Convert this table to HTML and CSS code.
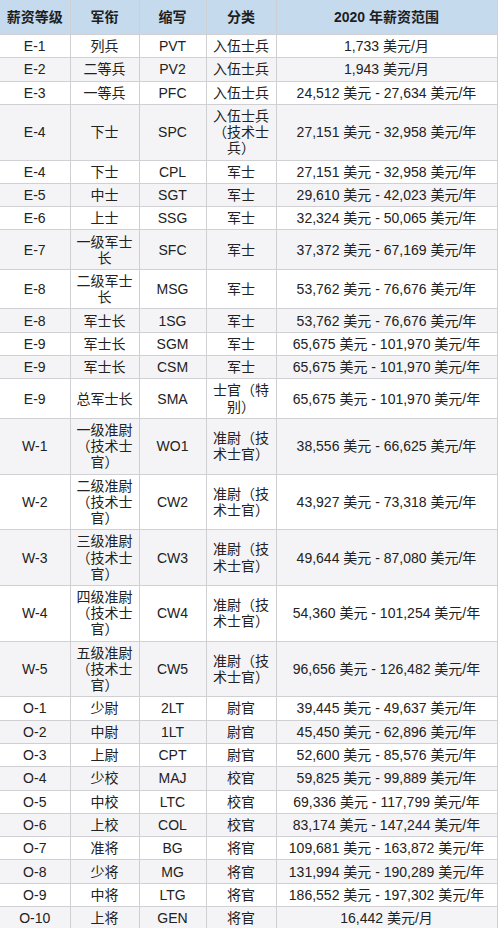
FILE: index.html
```html
<!DOCTYPE html>
<html lang="zh-CN">
<head>
<meta charset="utf-8">
<title>2020 年薪资范围</title>
<link rel="stylesheet" href="styles.css">
</head>
<body>
<table class="pay">
<colgroup>
<col class="c1"><col class="c2"><col class="c3"><col class="c4"><col class="c5">
</colgroup>
<thead>
<tr><th>薪资等级</th><th>军衔</th><th>缩写</th><th>分类</th><th>2020 年薪资范围</th></tr>
</thead>
<tbody>
<tr><td>E-1</td><td>列兵</td><td>PVT</td><td>入伍士兵</td><td>1,733 美元/月</td></tr>
<tr><td>E-2</td><td>二等兵</td><td>PV2</td><td>入伍士兵</td><td>1,943 美元/月</td></tr>
<tr><td>E-3</td><td>一等兵</td><td>PFC</td><td>入伍士兵</td><td>24,512 美元 - 27,634 美元/年</td></tr>
<tr><td>E-4</td><td>下士</td><td>SPC</td><td>入伍士兵（技术士兵）</td><td>27,151 美元 - 32,958 美元/年</td></tr>
<tr><td>E-4</td><td>下士</td><td>CPL</td><td>军士</td><td>27,151 美元 - 32,958 美元/年</td></tr>
<tr><td>E-5</td><td>中士</td><td>SGT</td><td>军士</td><td>29,610 美元 - 42,023 美元/年</td></tr>
<tr><td>E-6</td><td>上士</td><td>SSG</td><td>军士</td><td>32,324 美元 - 50,065 美元/年</td></tr>
<tr><td>E-7</td><td>一级军士长</td><td>SFC</td><td>军士</td><td>37,372 美元 - 67,169 美元/年</td></tr>
<tr><td>E-8</td><td>二级军士长</td><td>MSG</td><td>军士</td><td>53,762 美元 - 76,676 美元/年</td></tr>
<tr><td>E-8</td><td>军士长</td><td>1SG</td><td>军士</td><td>53,762 美元 - 76,676 美元/年</td></tr>
<tr><td>E-9</td><td>军士长</td><td>SGM</td><td>军士</td><td>65,675 美元 - 101,970 美元/年</td></tr>
<tr><td>E-9</td><td>军士长</td><td>CSM</td><td>军士</td><td>65,675 美元 - 101,970 美元/年</td></tr>
<tr><td>E-9</td><td>总军士长</td><td>SMA</td><td>士官（特别）</td><td>65,675 美元 - 101,970 美元/年</td></tr>
<tr><td>W-1</td><td>一级准尉（技术士官）</td><td>WO1</td><td>准尉（技术士官）</td><td>38,556 美元 - 66,625 美元/年</td></tr>
<tr><td>W-2</td><td>二级准尉（技术士官）</td><td>CW2</td><td>准尉（技术士官）</td><td>43,927 美元 - 73,318 美元/年</td></tr>
<tr><td>W-3</td><td>三级准尉（技术士官）</td><td>CW3</td><td>准尉（技术士官）</td><td>49,644 美元 - 87,080 美元/年</td></tr>
<tr><td>W-4</td><td>四级准尉（技术士官）</td><td>CW4</td><td>准尉（技术士官）</td><td>54,360 美元 - 101,254 美元/年</td></tr>
<tr><td>W-5</td><td>五级准尉（技术士官）</td><td>CW5</td><td>准尉（技术士官）</td><td>96,656 美元 - 126,482 美元/年</td></tr>
<tr><td>O-1</td><td>少尉</td><td>2LT</td><td>尉官</td><td>39,445 美元 - 49,637 美元/年</td></tr>
<tr><td>O-2</td><td>中尉</td><td>1LT</td><td>尉官</td><td>45,450 美元 - 62,896 美元/年</td></tr>
<tr><td>O-3</td><td>上尉</td><td>CPT</td><td>尉官</td><td>52,600 美元 - 85,576 美元/年</td></tr>
<tr><td>O-4</td><td>少校</td><td>MAJ</td><td>校官</td><td>59,825 美元 - 99,889 美元/年</td></tr>
<tr><td>O-5</td><td>中校</td><td>LTC</td><td>校官</td><td>69,336 美元 - 117,799 美元/年</td></tr>
<tr><td>O-6</td><td>上校</td><td>COL</td><td>校官</td><td>83,174 美元 - 147,244 美元/年</td></tr>
<tr><td>O-7</td><td>准将</td><td>BG</td><td>将官</td><td>109,681 美元 - 163,872 美元/年</td></tr>
<tr><td>O-8</td><td>少将</td><td>MG</td><td>将官</td><td>131,994 美元 - 190,289 美元/年</td></tr>
<tr><td>O-9</td><td>中将</td><td>LTG</td><td>将官</td><td>186,552 美元 - 197,302 美元/年</td></tr>
<tr><td>O-10</td><td>上将</td><td>GEN</td><td>将官</td><td>16,442 美元/月</td></tr>
</tbody>
</table>
</body>
</html>
```

FILE: styles.css
```css
html, body {
  margin: 0;
  padding: 0;
  background: #ffffff;
}

body {
  font-family: "Liberation Sans", "Noto Sans CJK SC", sans-serif;
  font-size: 14px;
  color: #222222;
}

.pay {
  width: 497px;
  table-layout: fixed;
  border-collapse: collapse;
  border-right: 1px solid #d0d0d4;
}

.pay .c1 { width: 70px; }
.pay .c2 { width: 69px; }
.pay .c3 { width: 67px; }
.pay .c4 { width: 70px; }
.pay .c5 { width: 221px; }

.pay th,
.pay td {
  text-align: center;
  vertical-align: middle;
  line-height: 16.2px;
  border: 1px solid #d0d0d4;
  word-break: break-all;
}

.pay th:first-child,
.pay td:first-child {
  border-left: none;
}

.pay th {
  background: #c6daee;
  color: #1e1e1e;
  font-weight: bold;
  padding: 9px 2px 8.8px;
  border-top: none;
}

.pay td {
  padding: 3.1px 2px 3px;
  background: #ffffff;
}

.pay tbody tr:nth-child(even) td {
  background: #f4f4f6;
}
```
